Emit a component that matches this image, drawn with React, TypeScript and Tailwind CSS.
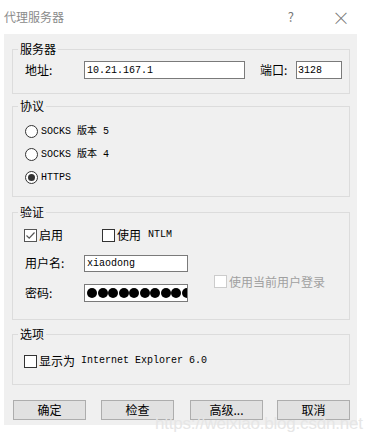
import React from "react";

const cjk = { fontFamily: '"Microsoft YaHei", "Noto Sans CJK SC", sans-serif' };
const mono = { fontFamily: '"Liberation Mono", "Noto Sans CJK SC", monospace' };

const Radio = ({ checked, label }: { checked?: boolean; label: string }) => (
  <div className="flex h-[23px] items-center">
    <span className="flex h-[13px] w-[13px] items-center justify-center rounded-full border border-[#333] bg-white">
      {checked && <span className="h-[7px] w-[7px] rounded-full bg-[#333]" />}
    </span>
    <span className="ml-[3px] text-[10px] text-black" style={mono}>
      {label}
    </span>
  </div>
);

const Check = ({
  checked,
  disabled,
  children,
}: {
  checked?: boolean;
  disabled?: boolean;
  children: React.ReactNode;
}) => (
  <div className="flex items-center">
    <span
      className={`flex h-[13px] w-[13px] items-center justify-center border bg-white ${
        disabled ? "border-[#cccccc]" : checked ? "border-[#555]" : "border-[#333]"
      }`}
    >
      {checked && (
        <svg width="11" height="11" viewBox="0 0 11 11">
          <path d="M1.5 5.5 L4.2 8.2 L9.5 2.5" stroke="#555" strokeWidth="1.2" fill="none" />
        </svg>
      )}
    </span>
    <span
      className={`ml-[2px] flex items-center text-[12px] leading-none ${disabled ? "text-[#a0a0a0]" : "text-black"}`}
      style={cjk}
    >
      {children}
    </span>
  </div>
);

const Group = ({
  title,
  className,
  children,
}: {
  title: string;
  className?: string;
  children: React.ReactNode;
}) => (
  <fieldset className={`m-0 border border-[#dcdcdc] p-0 ${className ?? ""}`}>
    <legend className="ml-[5px] h-[16px] px-[2px] text-[12px] leading-[16px] text-black" style={cjk}>
      {title}
    </legend>
    {children}
  </fieldset>
);

const Btn = ({ label }: { label: string }) => (
  <button
    className="flex h-[20px] w-[73px] items-center justify-center border border-[#adadad] bg-[#e1e1e1] text-[12px] text-black"
    style={cjk}
  >
    {label}
  </button>
);

export default function App() {
  return (
    <div className="relative h-[439px] w-[367px] overflow-hidden bg-white">
      {/* title bar */}
      <div className="flex h-[34px] items-center px-[4px]">
        <span className="text-[12px] text-[#8a8a8a]" style={cjk}>
          代理服务器
        </span>
        <span className="ml-auto mr-[38px] text-[13px] text-[#777]" style={cjk}>
          ?
        </span>
        <span className="mr-[13px] text-[18px] font-light leading-none text-[#777]" style={cjk}>
          ×
        </span>
      </div>

      {/* body */}
      <div className="mx-[4px] flex h-[391px] w-[353px] flex-col bg-[#f0f0f0] pl-[8px] pr-[7px] pt-[7px]">
        <Group title="服务器">
          <div className="flex items-center pb-[14px] pl-[12px] pt-[4px] text-[12px]" style={cjk}>
            <span className="w-[59px]">地址:</span>
            <div
              className="flex h-[18px] w-[161px] items-center border border-[#7a7a7a] bg-white pl-[2px] text-[10px]"
              style={mono}
            >
              10.21.167.1
            </div>
            <span className="ml-[15px] w-[36px]">端口:</span>
            <div
              className="flex h-[18px] w-[46px] items-center border border-[#7a7a7a] bg-white pl-[1px] text-[10px]"
              style={mono}
            >
              3128
            </div>
          </div>
        </Group>

        <Group title="协议" className="mt-[4px]">
          <div className="flex flex-col pb-[7px] pl-[12px] pt-[6px]">
            <Radio label="SOCKS 版本 5" />
            <Radio label="SOCKS 版本 4" />
            <Radio label="HTTPS" checked />
          </div>
        </Group>

        <Group title="验证" className="mt-[7px]">
          <div className="flex flex-col pb-[17px] pl-[11px] pt-[5px]">
            <div className="flex h-[20px] items-center">
              <div className="w-[78px]">
                <Check checked>启用</Check>
              </div>
              <Check>
                使用
                <span className="ml-[7px] text-[10px]" style={mono}>
                  NTLM
                </span>
              </Check>
            </div>
            <div className="flex items-center">
              <div className="flex flex-col text-[12px]" style={cjk}>
                <div className="mt-[9px] flex items-center">
                  <span className="w-[60px] pl-[1px]">用户名:</span>
                  <div
                    className="flex h-[17px] w-[104px] items-center border border-[#7a7a7a] bg-white pl-[2px] text-[10px]"
                    style={mono}
                  >
                    xiaodong
                  </div>
                </div>
                <div className="mt-[12px] flex items-center">
                  <span className="w-[60px] pl-[1px]">密码:</span>
                  <div className="flex h-[18px] w-[104px] items-center overflow-hidden border border-[#7a7a7a] bg-white pl-[2px]">
                    {Array.from({ length: 11 }).map((_, i) => (
                      <span key={i} className="mr-[0.5px] h-[10px] w-[10px] shrink-0 rounded-full bg-black" />
                    ))}
                  </div>
                </div>
              </div>
              <div className="ml-[26px] mt-[16px]">
                <Check disabled>使用当前用户登录</Check>
              </div>
            </div>
          </div>
        </Group>

        <Group title="选项" className="mt-[6px]">
          <div className="flex h-[42px] items-center pb-[4px] pl-[11px]">
            <Check>
              显示为
              <span className="ml-[6px] text-[10px]" style={mono}>
                Internet Explorer 6.0
              </span>
            </Check>
          </div>
        </Group>

        <div className="mt-[15px] flex pl-[1px] pr-0">
          <Btn label="确定" />
          <div className="ml-[15px]">
            <Btn label="检查" />
          </div>
          <div className="ml-[16px]">
            <Btn label="高级..." />
          </div>
          <div className="ml-[14px]">
            <Btn label="取消" />
          </div>
        </div>
      </div>

      <span
        className="pointer-events-none absolute left-[155px] top-[411px] text-[17px] tracking-[-0.2px] text-[#e6e6e6]"
        style={{ fontFamily: '"Liberation Sans", Arial, sans-serif' }}
      >
        https://weixiao.blog.csdn.net
      </span>
    </div>
  );
}
